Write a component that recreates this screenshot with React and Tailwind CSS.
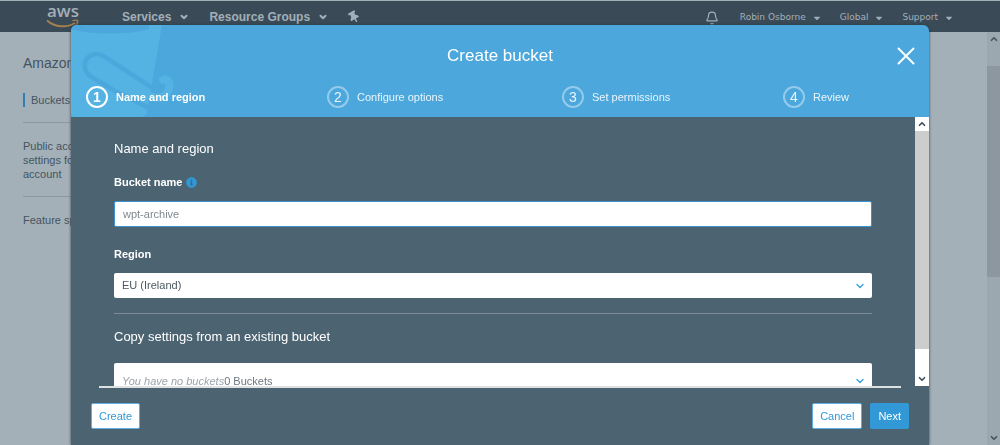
import { useState } from "react";
import { ChevronDown, ChevronUp, Bell, X } from "lucide-react";
import { FaThumbtack, FaCaretDown, FaInfoCircle } from "react-icons/fa";

const steps = ["Name and region", "Configure options", "Set permissions", "Review"];

const AwsLogo = () => (
  <a href="#" aria-label="aws" className="flex flex-col items-center text-[#a3afb8]">
    <span className="font-['Open_Sans',sans-serif] text-[17px] leading-[10px] font-semibold">aws</span>
    <svg className="mt-[3px]" width="34" height="9" viewBox="0 0 34 9" fill="none" stroke="#a5814f">
      <path d="M1 1.500C9 8.500 21 9 29 4" strokeWidth="2" />
      <path d="M26.500 1.700c2-.6 4.500-.6 5-.1s0 3-1.200 4.600" strokeWidth="1.400" />
    </svg>
  </a>
);

// Faded bucket drawing in the corner of the dialog header
const BucketArt = () => (
  <svg className="absolute top-0 left-0" width="110" height="92" viewBox="0 0 110 92" fill="none">
    <path d="M0 0H91L76 87Q75 92 70 92H4Q0 92 0 86Z" fill="#54b3e3" />
    <path d="M0 0H78V4C60 10 18 10 0 4Z" fill="#4ba7dc" />
    <path d="M83 64L34 32C19 22 6 40 19 51L44 66L78 83" stroke="#4ba7dc" strokeWidth="4.500" />
    <path d="M92 55C98 52 100 60 97 66C93 73 86 74 79 71" stroke="#54b3e3" strokeWidth="8" strokeLinecap="round" />
  </svg>
);

const TopMenu = ({ label }) => (
  <button className="flex items-center gap-[6px]">
    {label}
    <FaCaretDown size={10} />
  </button>
);

const App = () => {
  const [bucketName, setBucketName] = useState("wpt-archive");
  const [region, setRegion] = useState("EU (Ireland)");

  return (
    <div className="flex h-screen flex-col overflow-hidden bg-[#a4b0b8] font-['Liberation_Sans',Arial,sans-serif] text-[#435462]">
      {/* Top navigation */}
      <header className="flex h-8 shrink-0 items-center justify-between border-t border-[#a4b0b8] bg-[#3a4a57] px-[46px] text-[#a3afb8]">
        <nav className="flex items-center text-xs font-bold">
          <AwsLogo />
          <button className="ml-[42px] flex items-center gap-2">
            Services <ChevronDown size={10} strokeWidth={5} />
          </button>
          <button className="ml-5 flex items-center gap-2">
            Resource Groups <ChevronDown size={10} strokeWidth={5} />
          </button>
          <button aria-label="Pin" className="ml-5">
            <FaThumbtack size={12} className="-rotate-30" />
          </button>
        </nav>
        <div className="flex items-center gap-[18px] pt-[2px] font-['DejaVu_Sans',sans-serif] text-[9px]">
          <button aria-label="Notifications" className="mr-[3px]">
            <Bell size={14} />
          </button>
          <TopMenu label="Robin Osborne" />
          <TopMenu label="Global" />
          <TopMenu label="Support" />
        </div>
      </header>

      {/* Page behind the dialog */}
      <div className="flex min-h-0 flex-1 justify-between">
        <aside className="w-[123px] pl-[23px] text-[11px] leading-[14px]">
          <h1 className="pt-[22px] text-sm leading-[18px]">Amazon S3</h1>
          <a href="#" className="mt-[21px] block border-l-2 border-[#2f7fb5] pl-[6px]">
            Buckets
          </a>
          <div className="mt-[15px] border-y border-[#8b98a1] pt-4 pb-[15px]">
            <a href="#">Public access settings for this account</a>
          </div>
          <a href="#" className="mt-4 block">
            Feature spotlight
          </a>
        </aside>
        <div className="flex w-[13px] flex-col items-center justify-between bg-[#9ca8b0]">
          <ChevronUp size={10} strokeWidth={4} className="mt-[2px] shrink-0" />
          <div className="mt-[22px] mb-auto h-[51%] w-full bg-[#8c979f]" />
          <ChevronDown size={10} strokeWidth={4} className="mb-[2px] shrink-0" />
        </div>
      </div>

      {/* Create bucket dialog */}
      <div className="fixed inset-0 flex px-[71px] pt-[25px]">
        <section
          role="dialog"
          aria-label="Create bucket"
          className="flex min-w-0 flex-1 flex-col overflow-hidden rounded-t-md bg-[#4c6472] text-white shadow-[0_0_3px_#2d3b45]"
        >
          <div className="relative h-[92px] shrink-0 bg-[#4ba7dc]">
            <BucketArt />
            <div className="relative flex h-[61px] items-center justify-center">
              <h2 className="text-[17px]">Create bucket</h2>
              <button aria-label="Close" className="absolute right-2">
                <X size={30} strokeWidth={1.5} />
              </button>
            </div>
            <ol className="relative grid grid-cols-[241fr_235fr_221fr_146fr] pl-[15px] text-[11px]">
              {steps.map((step, i) => (
                <li
                  key={step}
                  className={i === 0 ? "flex items-center gap-2 font-bold" : "flex items-center gap-2 text-[#eaf5fc]"}
                >
                  <span
                    className={
                      i === 0
                        ? "flex size-[22px] items-center justify-center rounded-full border-2 border-white text-sm"
                        : "flex size-[22px] items-center justify-center rounded-full border-2 border-[#94cbec] text-sm"
                    }
                  >
                    {i + 1}
                  </span>
                  {step}
                </li>
              ))}
            </ol>
          </div>

          <div className="flex min-h-0 flex-1">
            <form className="min-w-0 flex-1 overflow-hidden px-[43px] pt-[23px] text-[11px]">
              <h3 className="text-[13px] leading-[18px]">Name and region</h3>
              <div className="mt-4 flex items-center gap-1">
                <label htmlFor="bucket-name" className="leading-4 font-bold">
                  Bucket name
                </label>
                <FaInfoCircle size={11} className="text-[#2f98d8]" />
              </div>
              <input
                id="bucket-name"
                type="text"
                autoFocus
                value={bucketName}
                onChange={(e) => setBucketName(e.target.value)}
                className="mt-[11px] block h-[26px] w-full rounded-xs border border-[#3b93d2] bg-white px-2 text-[#7f898f] outline-none"
              />
              <label htmlFor="region" className="mt-[19px] block leading-4 font-bold">
                Region
              </label>
              <div className="relative mt-[11px]">
                <select
                  id="region"
                  value={region}
                  onChange={(e) => setRegion(e.target.value)}
                  className="block h-[25px] w-full appearance-none rounded-xs bg-white px-2 text-[#4b5962] outline-none"
                >
                  <option>EU (Ireland)</option>
                </select>
                <ChevronDown size={12} strokeWidth={3} className="pointer-events-none absolute top-[7px] right-[6px] text-[#45a3dc]" />
              </div>
              <hr className="mt-[15px] border-[#7b8b96]" />
              <h3 className="mt-[14px] text-[13px] leading-[18px]">Copy settings from an existing bucket</h3>
              <button
                type="button"
                className="mt-[17px] flex h-9 w-full items-center justify-between rounded-xs bg-white pr-[6px] pl-2 leading-[10px] text-[#6d777e]"
              >
                <span>
                  <i className="text-[#9aa4aa]">You have no buckets</i>0 Buckets
                </span>
                <ChevronDown size={12} strokeWidth={3} className="text-[#45a3dc]" />
              </button>
            </form>
            <div className="flex w-[14px] flex-col items-center bg-white text-[#3e4f5b]">
              <ChevronUp size={10} strokeWidth={4} className="my-[2px] shrink-0" />
              <div className="h-[81%] w-full bg-[#cdcdcd]" />
              <ChevronDown size={10} strokeWidth={4} className="mt-auto mb-[2px] shrink-0" />
            </div>
          </div>

          <footer className="h-[59px] shrink-0 text-[11px]">
            <div className="mx-7 border-t-2 border-[#dde1e2]" />
            <div className="mx-5 mt-[15px] flex gap-2">
              <button className="mr-auto h-[26px] rounded-xs border border-[#5fb0e0] bg-white px-[7px] text-[#3299d6]">
                Create
              </button>
              <button className="h-[26px] rounded-xs border border-[#5fb0e0] bg-white px-[7px] text-[#3299d6]">
                Cancel
              </button>
              <button className="h-[26px] rounded-xs bg-[#3299d6] px-2">Next</button>
            </div>
          </footer>
        </section>
      </div>
    </div>
  );
};

export default App;
